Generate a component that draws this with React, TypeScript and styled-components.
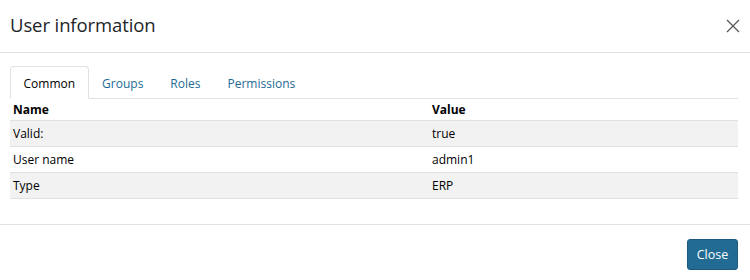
import React, { useState } from 'react'
import styled, { createGlobalStyle, css } from 'styled-components'

const GlobalStyle = createGlobalStyle`
    html, body {
        margin: 0;
        padding: 0;
        background: #fff;
    }

    body {
        font-family: "Open Sans", "Noto Sans", "Liberation Sans", sans-serif;
        color: #212529;
    }
`

const Modal = styled.div`
    width: 750px;
    height: 280px;
    display: flex;
    flex-flow: column nowrap;
    background: #fff;
`

const Header = styled.div`
    height: 53px;
    box-sizing: border-box;
    display: flex;
    align-items: center;
    justify-content: space-between;
    padding: 0 10px 3px 10px;
    border-bottom: 1px solid #dee2e6;
`

const Title = styled.h5`
    margin: 0;
    font-size: 18.5px;
    font-weight: 500;
    color: #212529;
    letter-spacing: -0.1px;
`

const CloseIcon = styled.button`
    width: 16px;
    height: 16px;
    padding: 0;
    margin-right: -1px;
    margin-top: 2px;
    border: 0;
    background: transparent;
    display: flex;
    align-items: center;
    justify-content: center;
    cursor: pointer;
`

const Body = styled.div`
    flex: 1;
    padding: 13px 12px 0 10px;
`

const TabList = styled.div`
    display: flex;
    height: 32px;
    border-bottom: 1px solid #dee2e6;
`

interface TabProps {
    active: boolean
}

const Tab = styled.button<TabProps>`
    font-family: inherit;
    font-size: 12px;
    padding: 2px 12.5px 0;
    margin-bottom: -1px;
    background: transparent;
    border: 1px solid transparent;
    border-radius: 4px 4px 0 0;
    color: #236a93;
    cursor: pointer;

    ${({ active }) => active && css`
        color: #000;
        background: #fff;
        border-color: #dee2e6 #dee2e6 #fff;
    `}
`

const Table = styled.table`
    width: 100%;
    border-collapse: collapse;
    font-size: 12px;
    color: #000;
`

const HeadCell = styled.th`
    text-align: left;
    font-weight: 700;
    height: 21px;
    padding: 0 3px;
    vertical-align: middle;

    &:first-child {
        width: 413px;
    }
`

interface RowProps {
    striped: boolean
}

const Row = styled.tr<RowProps>`
    height: 26px;
    background: ${({ striped }) => (striped ? '#f2f2f2' : '#fff')};
    border-top: 1px solid #dee2e6;
    border-bottom: 1px solid #dee2e6;
`

const Cell = styled.td`
    padding: 0 3px;
    vertical-align: middle;
`

const Footer = styled.div`
    height: 56px;
    box-sizing: border-box;
    border-top: 1px solid #dee2e6;
    display: flex;
    align-items: flex-start;
    justify-content: flex-end;
    padding: 14px 12px 0 0;
`

const Button = styled.button`
    font-family: inherit;
    font-size: 12.5px;
    color: #fff;
    background: #226b93;
    border: 1px solid #1b5a7d;
    border-radius: 3px;
    width: 51px;
    height: 31px;
    padding: 0;
    cursor: pointer;
`

const tabs = ['Common', 'Groups', 'Roles', 'Permissions']

const rows = [
    { name: 'Valid:', value: 'true' },
    { name: 'User name', value: 'admin1' },
    { name: 'Type', value: 'ERP' },
]

export default function App() {
    const [active, setActive] = useState('Common')

    return (
        <>
            <GlobalStyle />
            <Modal>
                <Header>
                    <Title>User information</Title>
                    <CloseIcon aria-label="Close">
                        <svg width="14" height="14" viewBox="0 0 14 14">
                            <path d="M1 1 L13 13 M13 1 L1 13" stroke="#555" strokeWidth="1.2" fill="none" />
                        </svg>
                    </CloseIcon>
                </Header>
                <Body>
                    <TabList>
                        {tabs.map(t => (
                            <Tab key={t} active={t === active} onClick={() => setActive(t)}>
                                {t}
                            </Tab>
                        ))}
                    </TabList>
                    <Table>
                        <thead>
                            <tr>
                                <HeadCell>Name</HeadCell>
                                <HeadCell>Value</HeadCell>
                            </tr>
                        </thead>
                        <tbody>
                            {rows.map((r, i) => (
                                <Row key={r.name} striped={i % 2 === 0}>
                                    <Cell>{r.name}</Cell>
                                    <Cell>{r.value}</Cell>
                                </Row>
                            ))}
                        </tbody>
                    </Table>
                </Body>
                <Footer>
                    <Button>Close</Button>
                </Footer>
            </Modal>
        </>
    )
}
